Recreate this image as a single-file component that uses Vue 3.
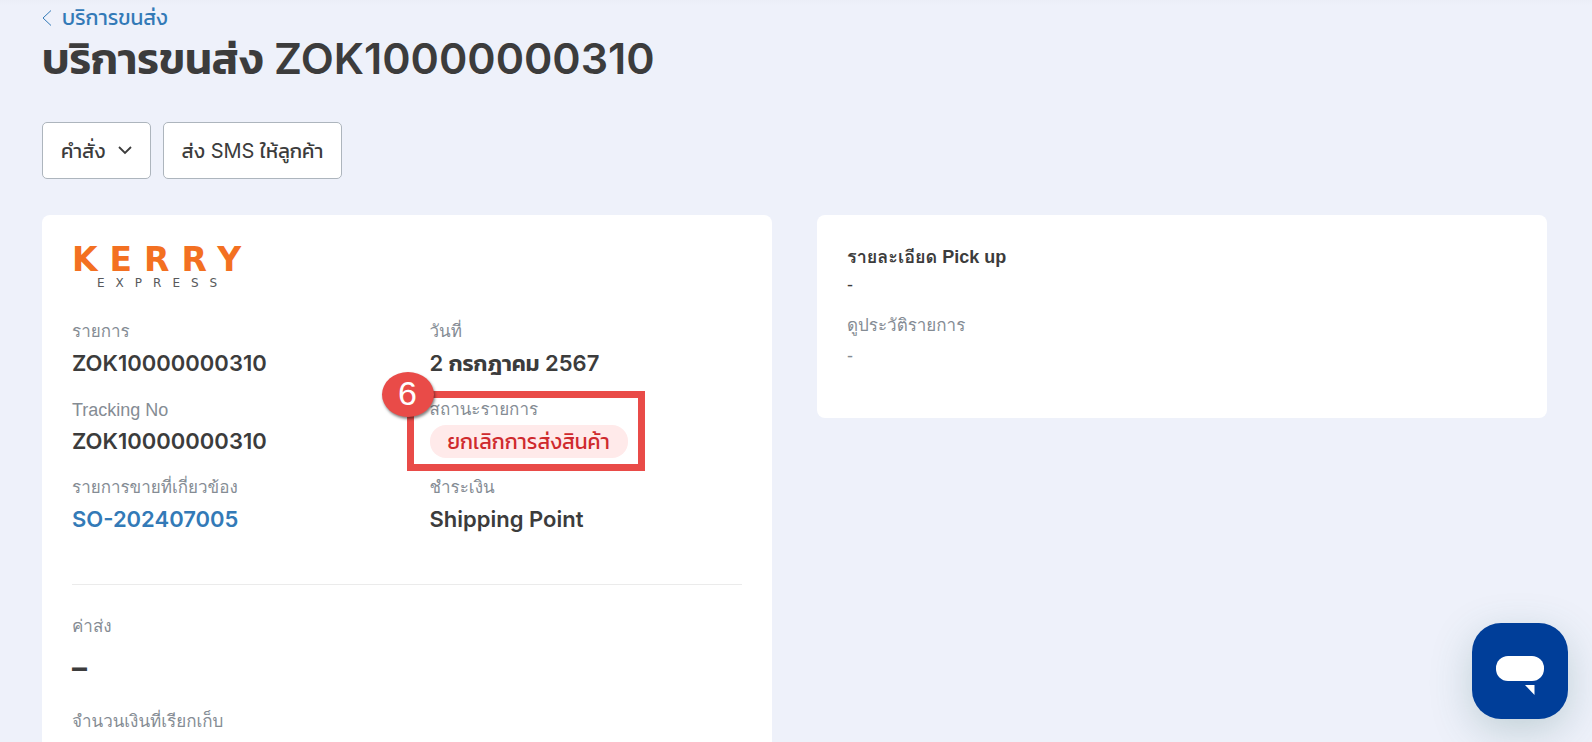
<script setup>
const details = [
  { label: 'รายการ', value: 'ZOK10000000310' },
  { label: 'วันที่', value: '2 กรกฎาคม 2567' },
  { label: 'Tracking No', value: 'ZOK10000000310', lang: 'en' },
  { label: 'สถานะรายการ', value: 'ยกเลิกการส่งสินค้า', status: true },
  { label: 'รายการขายที่เกี่ยวข้อง', value: 'SO-202407005', href: '#' },
  { label: 'ชำระเงิน', value: 'Shipping Point' },
]
</script>

<template>
  <div class="page" lang="th">
    <header>
      <a class="back" href="#">
        <svg width="10" height="16" viewBox="0 0 10 16" aria-hidden="true">
          <path d="M9 .5 1 8l8 7.500" fill="none" stroke="currentColor" />
        </svg>
        <span>บริการขนส่ง</span>
      </a>
      <h1>บริการขนส่ง ZOK10000000310</h1>
    </header>

    <div class="actions">
      <button type="button" class="action menu">
        <span>คำสั่ง</span>
        <svg width="14" height="9" viewBox="0 0 14 9" aria-hidden="true">
          <path d="M1 1l6 6 6-6" fill="none" stroke="currentColor" stroke-width="1.800" />
        </svg>
      </button>
      <button type="button" class="action">ส่ง SMS ให้ลูกค้า</button>
    </div>

    <main class="cards">
      <section class="card">
        <svg class="logo" width="172" height="44" viewBox="0 0 172 44" role="img" aria-label="Kerry Express">
          <text class="kerry" x="0" y="26">KERRY</text>
          <text class="express" x="25" y="42">EXPRESS</text>
        </svg>
        <dl class="details">
          <div v-for="(item, i) in details" :key="i" class="field">
            <dt :lang="item.lang || 'th'">{{ item.label }}</dt>
            <dd>
              <span v-if="item.status" class="status">{{ item.value }}</span>
              <a v-else-if="item.href" :href="item.href">{{ item.value }}</a>
              <template v-else>{{ item.value }}</template>
            </dd>
            <div v-if="item.status" class="callout"><span class="step">6</span></div>
          </div>
        </dl>
        <dl class="fees">
          <dt>ค่าส่ง</dt>
          <dd>–</dd>
          <dt>จำนวนเงินที่เรียกเก็บ</dt>
        </dl>
      </section>

      <section class="card pickup">
        <h2>รายละเอียด Pick up</h2>
        <p>-</p>
        <h3>ดูประวัติรายการ</h3>
        <p class="muted">-</p>
      </section>
    </main>

    <button type="button" class="chat" aria-label="Chat">
      <svg width="96" height="96" viewBox="0 0 96 96" aria-hidden="true">
        <rect x="24" y="33" width="48" height="25" rx="12" fill="#fff" />
        <path d="M53 62h9.500v10z" fill="#fff" />
      </svg>
    </button>
  </div>
</template>

<style>
body {
  margin: 0;
  background: #eef1fa;
}
</style>

<style scoped>
.page {
  box-sizing: border-box;
  height: 100vh;
  overflow: hidden;
  padding: 3px 45px 0 42px;
  background: linear-gradient(#ebeef7, #eef1fa 6px);
  color: #3c3c3c;
  font-family: Inter, Kanit, "Noto Sans Thai", "Noto Sans", sans-serif;
}
.back {
  display: flex;
  align-items: center;
  gap: 10px;
  width: max-content;
  height: 30px;
  color: #337ab7;
  font-size: 21px;
  line-height: 30px;
  text-decoration: none;
}
h1 {
  margin: 0;
  font-size: 43px;
  font-weight: 600;
  line-height: 50px;
  white-space: nowrap;
}
.actions {
  display: flex;
  gap: 12px;
  margin-top: 39px;
}
.action {
  display: flex;
  align-items: center;
  gap: 12px;
  height: 57px;
  padding: 0 18px;
  border: 1px solid #adb5bd;
  border-radius: 5px;
  background: #fff;
  color: #3c3c3c;
  font-family: inherit;
  font-size: 20px;
  white-space: nowrap;
}
.cards {
  display: grid;
  grid-template-columns: 1fr 1fr;
  align-items: start;
  gap: 45px;
  margin-top: 36px;
}
.card {
  box-sizing: border-box;
  padding: 30px;
  border-radius: 8px;
  background: #fff;
}
.logo {
  display: block;
  overflow: visible;
}
.kerry {
  fill: #f37021;
  font: bold 33px "DejaVu Sans", sans-serif;
  letter-spacing: 12px;
}
.express {
  fill: #58595b;
  font: 12px "DejaVu Sans", sans-serif;
  letter-spacing: 11px;
}
dl,
dd {
  margin: 0;
}
.details {
  display: grid;
  grid-template-columns: 1fr 1fr;
  column-gap: 45px;
  margin-top: 30px;
  padding-bottom: 31px;
  border-bottom: 1px solid #ebebeb;
}
.field {
  position: relative;
  height: 78px;
}
dt,
h2,
h3,
p {
  margin: 0;
  font-family: "Liberation Sans", Loma, "Noto Sans Thai Looped", "Noto Sans Thai", sans-serif;
  font-size: 18px;
  line-height: 28px;
}
dt,
h3,
.muted {
  color: #858c94;
  font-weight: 400;
}
dt {
  line-height: 26px;
}
dt:lang(th),
h3 {
  font-size: 17px;
}
.details dd {
  font-size: 22px;
  font-weight: 600;
  line-height: 36px;
  white-space: nowrap;
}
.details a {
  color: #337ab7;
  text-decoration: none;
}
.details .status {
  display: inline-block;
  padding: 0 18px;
  border-radius: 16px;
  background: #ffeaea;
  color: #cf2a2e;
  font-size: 21px;
  font-weight: 400;
  line-height: 33px;
}
.callout {
  position: absolute;
  top: -6px;
  left: -23px;
  box-sizing: border-box;
  width: 238px;
  height: 80px;
  border: 7px solid #e94b48;
}
.step {
  position: absolute;
  top: -26px;
  left: -32px;
  width: 52px;
  height: 45px;
  border-radius: 50%;
  background: #e94b48;
  box-shadow: 1px 2px 3px rgba(0, 0, 0, 0.5);
  color: #fff;
  font-family: "Liberation Sans", sans-serif;
  font-size: 34px;
  line-height: 42px;
  text-align: center;
}
.fees {
  padding: 29px 0 68px;
}
.fees dd {
  height: 69px;
  font-size: 30px;
  font-weight: 700;
  line-height: 54px;
}
.pickup {
  min-height: 203px;
  padding-top: 28px;
}
h3 {
  margin: 13px 0 2px;
}
.chat {
  position: fixed;
  right: 24px;
  bottom: 23px;
  width: 96px;
  height: 96px;
  padding: 0;
  border: 0;
  border-radius: 29px;
  background: #003e99;
  box-shadow: 0 12px 40px rgba(60, 110, 110, 0.25);
}
.chat svg {
  display: block;
}
</style>
